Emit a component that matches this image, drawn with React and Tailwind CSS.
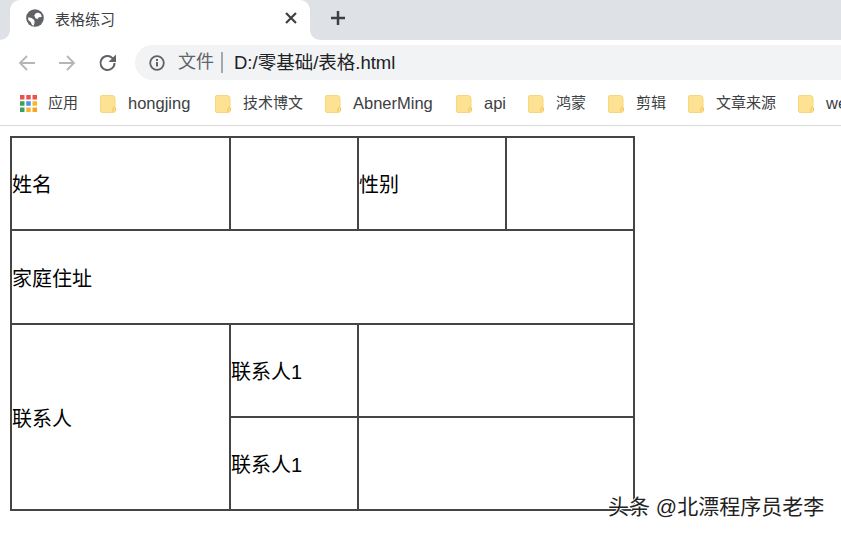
import React from "react";

const sans = "font-['Liberation_Sans','Noto_Sans_CJK_SC',sans-serif]";

function Folder() {
  return (
    <svg width="16" height="18" viewBox="0 0 16 18" className="shrink-0">
      <path d="M1.500 0.500H12a3 3 0 0 1 3 3V16a1.500 1.500 0 0 1-1.500 1.500H2A1.500 1.500 0 0 1 .5 16V1.500a1 1 0 0 1 1-1z" fill="#fde293" stroke="#f6d77e" />
      <path d="M13 17v-4a1.500 1.500 0 0 1 2.500 0v3" fill="#fde293" stroke="#eec65a" />
    </svg>
  );
}

function Apps() {
  const c = ["#e8544a", "#e8544a", "#e8544a", "#3c9f5f", "#4a90e8", "#f5b52e", "#3c9f5f", "#f5b52e", "#f5a623"];
  return (
    <svg width="17" height="17" viewBox="0 0 17 17" className="shrink-0 -mt-[3px]">
      {c.map((x, i) => (
        <rect key={i} x={(i % 3) * 6.25} y={Math.floor(i / 3) * 6.25} width="4.500" height="4.500" fill={x} />
      ))}
    </svg>
  );
}

const marks = [
  ["hongjing", "w-[115px]", "text-[16.5px]"],
  ["技术博文", "w-[110px]", "text-[15px]"],
  ["AbnerMing", "w-[131px]", "text-[16.5px]"],
  ["api", "w-[72px]", "text-[16.5px]"],
  ["鸿蒙", "w-[80px]", "text-[15px]"],
  ["剪辑", "w-[80px]", "text-[15px]"],
  ["文章来源", "w-[110px]", "text-[15px]"],
  ["we", "", "text-[16.5px]"],
];

const cell = "border-2 border-[#454545] p-0 pt-[3px] align-middle text-left font-normal";

export default function App() {
  return (
    <div className={`relative w-[841px] h-[534px] overflow-hidden bg-white ${sans}`}>
      <div className="flex h-[40px]">
        <div className="w-[10px] bg-[#dee1e6] rounded-br-[10px]" />
        <div className="w-[300px] bg-[#dee1e6]">
          <div className="h-full bg-white rounded-t-[10px] flex items-center pl-[16px] pr-[13px]">
            <svg width="18" height="18" viewBox="0 0 24 24" className="shrink-0 -mt-[5px]">
              <circle cx="12" cy="12" r="11.800" fill="#5f6368" />
              <path d="M13 5.500c2-1.200 5-.8 7 1.500l1 3.500-4 .5-2 2.500-2.500-1.500-1.500-3.500z" fill="#fff" />
              <path d="M3 11l4.500 1 3.500 2.500.5 3-1 4.500-2.500-.5-1.500-4-3.500-3z" fill="#fff" />
            </svg>
            <span className="ml-[11px] -mt-[2px] text-[15px] leading-none text-[#3c4043]">表格练习</span>
            <svg width="12" height="12" viewBox="0 0 12 12" className="ml-auto -mt-[5px]">
              <path d="M1 1l10 10M11 1L1 11" stroke="#3c4043" strokeWidth="2.200" />
            </svg>
          </div>
        </div>
        <div className="flex-1 bg-[#dee1e6] rounded-bl-[10px] flex items-center pl-[20px]">
          <svg width="16" height="16" viewBox="0 0 16 16" className="-mt-[4px]">
            <path d="M8 1v14M1 8h14" stroke="#3c4043" strokeWidth="2.500" />
          </svg>
        </div>
      </div>

      <div className="h-[45px] flex items-center">
        <div className="flex items-center w-[135px] pl-[18px]">
          <svg width="18" height="18" viewBox="0 0 18 18" className="shrink-0">
            <path d="M17 9H2M9 2L2 9l7 7" fill="none" stroke="#b4b6b9" strokeWidth="1.800" />
          </svg>
          <svg width="18" height="18" viewBox="0 0 18 18" className="ml-[22px] shrink-0">
            <path d="M1 9h15M9 2l7 7-7 7" fill="none" stroke="#b4b6b9" strokeWidth="1.800" />
          </svg>
          <svg width="20" height="20" viewBox="0 0 20 20" className="ml-[22px] shrink-0">
            <path d="M16.500 10a7 7 0 1 1-2-4.900L17 7.500" fill="none" stroke="#5f6368" strokeWidth="2" />
            <path d="M18 1.500V9h-7.500z" fill="#5f6368" />
          </svg>
        </div>
        <div className="flex-1 h-[35px] bg-[#f1f3f4] rounded-l-full flex items-center pl-[14px]">
          <svg width="16" height="16" viewBox="0 0 16 16" className="shrink-0">
            <circle cx="8" cy="8" r="6.800" fill="none" stroke="#5f6368" strokeWidth="1.800" />
            <path d="M8 7v4.500" stroke="#5f6368" strokeWidth="2" />
            <rect x="7" y="4" width="2" height="2" fill="#5f6368" />
          </svg>
          <span className="ml-[13px] text-[18px] text-[#5f6368]">文件</span>
          <span className="ml-[7px] w-[2px] h-[21px] bg-[#a5a8ab]" />
          <span className="ml-[11px] text-[18.5px] text-[#202124] whitespace-nowrap">D:/零基础/表格.html</span>
        </div>
      </div>

      <div className="h-[41px] border-b border-[#d9d9d9] flex items-center pl-[20px] whitespace-nowrap">
        <Apps />
        <span className="ml-[11px] -mt-[3px] w-[52px] shrink-0 text-[15px] text-[#3c4043]">应用</span>
        {marks.map(([t, w, s]) => (
          <div key={t} className={`flex items-center shrink-0 -mt-[3px] ${w}`}>
            <Folder />
            <span className={`ml-[12px] text-[#3c4043] ${s}`}>{t}</span>
          </div>
        ))}
      </div>

      <table className="ml-[10px] mt-[10px] border-collapse text-[20px] text-black table-fixed w-[625px]">
        <colgroup>
          <col className="w-[219px]" />
          <col className="w-[128px]" />
          <col className="w-[148px]" />
          <col className="w-[128px]" />
        </colgroup>
        <tbody>
          <tr className="h-[93px]">
            <td className={cell}>姓名</td>
            <td className={cell} />
            <td className={cell}>性别</td>
            <td className={cell} />
          </tr>
          <tr className="h-[94px]">
            <td className={cell} colSpan={4}>家庭住址</td>
          </tr>
          <tr className="h-[93px]">
            <td className={cell} rowSpan={2}>联系人</td>
            <td className={cell}>联系人1</td>
            <td className={cell} colSpan={2} />
          </tr>
          <tr className="h-[93px]">
            <td className={cell}>联系人1</td>
            <td className={cell} colSpan={2} />
          </tr>
        </tbody>
      </table>

      <div className="absolute left-[608px] top-[494px] text-[21px] leading-[26px] whitespace-nowrap text-[#222] [text-shadow:1px_1px_0_#fff,-1px_0_0_#fff,0_-1px_0_#fff]">
        头条 @北漂程序员老李
      </div>
    </div>
  );
}
